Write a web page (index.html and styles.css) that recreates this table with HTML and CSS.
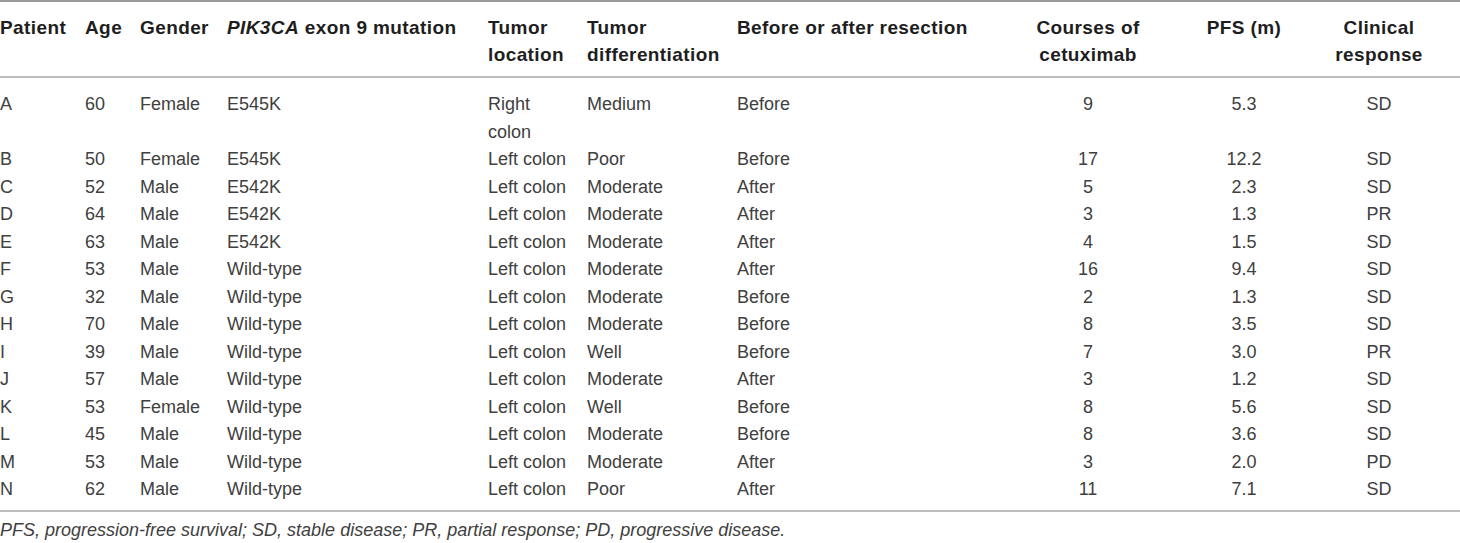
FILE: index.html
```html
<!DOCTYPE html>
<html>
<head>
<meta charset="utf-8">
<link rel="stylesheet" href="styles.css">
</head>
<body>
<div class="wrap">
<table class="data">
<colgroup>
<col class="c-patient"><col class="c-age"><col class="c-gender"><col class="c-pik"><col class="c-loc"><col class="c-diff"><col class="c-resect"><col class="c-courses"><col class="c-pfs"><col class="c-resp">
</colgroup>
<thead>
<tr>
<th>Patient</th><th>Age</th><th>Gender</th><th><i>PIK3CA</i> exon 9 mutation</th><th>Tumor location</th><th>Tumor differentiation</th><th>Before or after resection</th><th class="ctr">Courses of cetuximab</th><th class="ctr">PFS (m)</th><th class="ctr">Clinical response</th>
</tr>
</thead>
<tbody>
<tr class="first"><td>A</td><td>60</td><td>Female</td><td>E545K</td><td>Right colon</td><td>Medium</td><td>Before</td><td class="ctr">9</td><td class="ctr">5.3</td><td class="ctr">SD</td></tr>
<tr><td>B</td><td>50</td><td>Female</td><td>E545K</td><td>Left colon</td><td>Poor</td><td>Before</td><td class="ctr">17</td><td class="ctr">12.2</td><td class="ctr">SD</td></tr>
<tr><td>C</td><td>52</td><td>Male</td><td>E542K</td><td>Left colon</td><td>Moderate</td><td>After</td><td class="ctr">5</td><td class="ctr">2.3</td><td class="ctr">SD</td></tr>
<tr><td>D</td><td>64</td><td>Male</td><td>E542K</td><td>Left colon</td><td>Moderate</td><td>After</td><td class="ctr">3</td><td class="ctr">1.3</td><td class="ctr">PR</td></tr>
<tr><td>E</td><td>63</td><td>Male</td><td>E542K</td><td>Left colon</td><td>Moderate</td><td>After</td><td class="ctr">4</td><td class="ctr">1.5</td><td class="ctr">SD</td></tr>
<tr><td>F</td><td>53</td><td>Male</td><td>Wild-type</td><td>Left colon</td><td>Moderate</td><td>After</td><td class="ctr">16</td><td class="ctr">9.4</td><td class="ctr">SD</td></tr>
<tr><td>G</td><td>32</td><td>Male</td><td>Wild-type</td><td>Left colon</td><td>Moderate</td><td>Before</td><td class="ctr">2</td><td class="ctr">1.3</td><td class="ctr">SD</td></tr>
<tr><td>H</td><td>70</td><td>Male</td><td>Wild-type</td><td>Left colon</td><td>Moderate</td><td>Before</td><td class="ctr">8</td><td class="ctr">3.5</td><td class="ctr">SD</td></tr>
<tr><td>I</td><td>39</td><td>Male</td><td>Wild-type</td><td>Left colon</td><td>Well</td><td>Before</td><td class="ctr">7</td><td class="ctr">3.0</td><td class="ctr">PR</td></tr>
<tr><td>J</td><td>57</td><td>Male</td><td>Wild-type</td><td>Left colon</td><td>Moderate</td><td>After</td><td class="ctr">3</td><td class="ctr">1.2</td><td class="ctr">SD</td></tr>
<tr><td>K</td><td>53</td><td>Female</td><td>Wild-type</td><td>Left colon</td><td>Well</td><td>Before</td><td class="ctr">8</td><td class="ctr">5.6</td><td class="ctr">SD</td></tr>
<tr><td>L</td><td>45</td><td>Male</td><td>Wild-type</td><td>Left colon</td><td>Moderate</td><td>Before</td><td class="ctr">8</td><td class="ctr">3.6</td><td class="ctr">SD</td></tr>
<tr><td>M</td><td>53</td><td>Male</td><td>Wild-type</td><td>Left colon</td><td>Moderate</td><td>After</td><td class="ctr">3</td><td class="ctr">2.0</td><td class="ctr">PD</td></tr>
<tr class="last"><td>N</td><td>62</td><td>Male</td><td>Wild-type</td><td>Left colon</td><td>Poor</td><td>After</td><td class="ctr">11</td><td class="ctr">7.1</td><td class="ctr">SD</td></tr>
</tbody>
</table>
<p class="note">PFS, progression-free survival; SD, stable disease; PR, partial response; PD, progressive disease.</p>
</div>
</body>
</html>
```
FILE: styles.css
```css
html, body {
  margin: 0;
  padding: 0;
  background: #ffffff;
}
body {
  font-family: "Liberation Sans", Arial, Helvetica, sans-serif;
  font-size: 18px;
  color: #404040;
}
.wrap {
  width: 1460px;
}
.data {
  width: 1460px;
  table-layout: fixed;
  border-collapse: collapse;
  border-top: 2px solid #9a9a9a;
  border-bottom: 2px solid #bdbdbd;
}
.c-patient { width: 85px; }
.c-age { width: 55px; }
.c-gender { width: 87px; }
.c-pik { width: 261px; }
.c-loc { width: 99px; }
.c-diff { width: 150px; }
.c-resect { width: 273px; }
.c-courses { width: 156px; }
.c-pfs { width: 156px; }
.c-resp { width: 138px; }

.data th {
  text-align: left;
  vertical-align: top;
  font-weight: bold;
  font-size: 19px;
  color: #1e1e1e;
  line-height: 27px;
  padding: 12px 10px 8px 0;
  letter-spacing: 0.4px;
  border-bottom: 2px solid #bdbdbd;
}
.data td {
  text-align: left;
  vertical-align: top;
  line-height: 27.5px;
  padding: 0 12px 0 0;
}
.data tr.first td { padding-top: 13px; }
.data tr.last td { padding-bottom: 6px; }
.data th.ctr, .data td.ctr {
  text-align: center;
  padding-left: 6px;
  padding-right: 6px;
}
.data th:last-child, .data td:last-child {
  padding-right: 30px;
}
.note {
  margin: 0;
  padding-top: 5px;
  font-style: italic;
  line-height: 27.5px;
  color: #404040;
}
```
